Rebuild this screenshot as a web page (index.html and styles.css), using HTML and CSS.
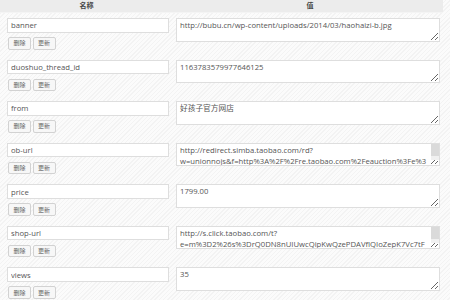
FILE: index.html
```html
<!DOCTYPE html>
<html lang="zh-CN">
<head>
  <meta charset="UTF-8">
  <title>自定义栏目</title>
  <link rel="stylesheet" href="styles.css">
</head>
<body>

<div class="meta-table">
  <div class="meta-head">
    <div>名称</div>
    <div>值</div>
  </div>

  <div class="meta-list">
    <div class="meta-row">
      <div class="meta-key">
        <input type="text" value="banner">
        <div class="meta-actions"><button>删除</button><button>更新</button></div>
      </div>
      <div class="meta-value">
        <textarea>http://bubu.cn/wp-content/uploads/2014/03/haohaizi-b.jpg</textarea>
      </div>
    </div>

    <div class="meta-row">
      <div class="meta-key">
        <input type="text" value="duoshuo_thread_id">
        <div class="meta-actions"><button>删除</button><button>更新</button></div>
      </div>
      <div class="meta-value">
        <textarea>1163783579977646125</textarea>
      </div>
    </div>

    <div class="meta-row">
      <div class="meta-key">
        <input type="text" value="from">
        <div class="meta-actions"><button>删除</button><button>更新</button></div>
      </div>
      <div class="meta-value">
        <textarea>好孩子官方网店</textarea>
      </div>
    </div>

    <div class="meta-row">
      <div class="meta-key">
        <input type="text" value="ob-url">
        <div class="meta-actions"><button>删除</button><button>更新</button></div>
      </div>
      <div class="meta-value scroll">
        <textarea>http://redirect.simba.taobao.com/rd?w=unionnojs&amp;f=http%3A%2F%2Fre.taobao.com%2Feauction%3Fe%3DxR7ThLZg7ldtCuJEkA5D5DB7B9CsDpQ0j2Kp1WEB4ZQ%253D%26ptype%3D100010&amp;k=e2e107a2b72ca1b1&amp;c=un&amp;b=alimm_0&amp;p=mm_26039255_2436386_9245023</textarea>
      </div>
    </div>

    <div class="meta-row">
      <div class="meta-key">
        <input type="text" value="price">
        <div class="meta-actions"><button>删除</button><button>更新</button></div>
      </div>
      <div class="meta-value">
        <textarea>1799.00</textarea>
      </div>
    </div>

    <div class="meta-row">
      <div class="meta-key">
        <input type="text" value="shop-url">
        <div class="meta-actions"><button>删除</button><button>更新</button></div>
      </div>
      <div class="meta-value scroll">
        <textarea>http://s.click.taobao.com/t?e=m%3D2%26s%3DrQ0DN8nUIUwcQipKwQzePDAVflQIoZepK7Vc7tFgwiHjf2vlNIV67g9yu4n5yFtMn%2Fj9CizY5%2FQx6twRzDlB8hFFxtc6xo5mZpdOQ8B8XkPgs4q3AkbdJvXR</textarea>
      </div>
    </div>

    <div class="meta-row">
      <div class="meta-key">
        <input type="text" value="views">
        <div class="meta-actions"><button>删除</button><button>更新</button></div>
      </div>
      <div class="meta-value">
        <textarea>35</textarea>
      </div>
    </div>
  </div>
</div>

</body>
</html>
```

FILE: styles.css
```css
* {
  box-sizing: border-box;
}

body {
  margin: 0;
  font-family: 'Open Sans', 'Noto Sans CJK SC', sans-serif;
  color: #555;
  background-color: #f7f7f7;
  background-image: repeating-linear-gradient(135deg, #f3f3f3 0, #f3f3f3 1px, #fbfbfb 1px, #fbfbfb 3px);
  overflow: hidden;
}

.meta-table {
  width: 443px;
}

.meta-head {
  display: grid;
  grid-template-columns: 173px 270px;
  height: 13px;
  background: #ececec;
  border-bottom: 1px solid #f4f4f4;
  font-size: 7px;
  font-weight: 700;
  line-height: 12px;
  color: #444;
  text-align: center;
}

.meta-head div:last-child {
  padding-left: 4px;
}

.meta-list {
  padding-top: 5px;
}

.meta-row {
  display: grid;
  grid-template-columns: 173px 270px;
  height: 41.57px;
}

.meta-key {
  padding-left: 7px;
}

.meta-key input {
  display: block;
  width: 162px;
  height: 14.5px;
  margin: 0;
  padding: 0 3px;
  border: 1px solid #dedede;
  border-radius: 0;
  background: #fff;
  font-family: inherit;
  font-size: 7.7px;
  color: #555;
  outline: none;
}

.meta-actions {
  display: flex;
  gap: 1.5px;
  margin-top: 4.5px;
  padding-left: 1px;
}

.meta-actions button {
  width: 23px;
  height: 12.5px;
  margin: 0;
  padding: 0;
  border: 1px solid #d2d2d2;
  border-radius: 2px;
  background: #f7f7f7;
  font-family: inherit;
  font-size: 6px;
  line-height: 10px;
  color: #666;
}

.meta-value {
  position: relative;
  padding-left: 3px;
  align-self: start;
  width: 266.5px;
}

.meta-value textarea {
  display: block;
  width: 263.5px;
  height: 23.5px;
  margin: 0;
  padding: 1px 3px;
  border: 1px solid #dedede;
  border-radius: 0;
  background: #fff;
  font-family: inherit;
  font-size: 7.7px;
  line-height: 11.5px;
  color: #555;
  outline: none;
  overflow: hidden;
}

.meta-value.scroll textarea {
  padding-right: 10px;
}

/* fake scrollbar, the headless browser hides real ones */
.meta-value.scroll::after {
  content: "";
  position: absolute;
  top: 1px;
  right: 1px;
  width: 7.5px;
  height: 16px;
  background: linear-gradient(#dadada 0, #dadada 12px, #f0f0f0 12px);
}
```
